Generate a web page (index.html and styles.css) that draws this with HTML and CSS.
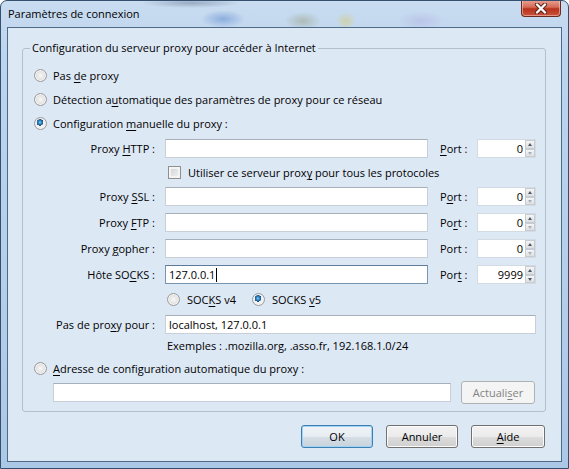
FILE: index.html
```html
<!DOCTYPE html>
<html lang="fr">
<head>
    <meta charset="UTF-8">
    <meta name="viewport" content="width=device-width, initial-scale=1.0">
    <title>Paramètres de connexion</title>
    <link rel="stylesheet" href="styles.css">
</head>
<body>
    <div class="window">
        <div class="titlebar">
            <span class="title">Paramètres de connexion</span>
            <span class="close">
                <svg width="16" height="11" viewBox="0 0 16 11">
                    <path d="M4 1.5 L12 9.5 M12 1.5 L4 9.5" stroke="#5a2018" stroke-width="4.2" stroke-linecap="round"/>
                    <path d="M4 1.5 L12 9.5 M12 1.5 L4 9.5" stroke="#fff" stroke-width="2.4" stroke-linecap="round"/>
                </svg>
            </span>
        </div>
        <div class="client">
            <fieldset class="group">
                <legend>Configuration du serveur proxy pour accéder à Internet</legend>
                <div class="option"><span class="radio"></span><span>Pas <u>d</u>e proxy</span></div>
                <div class="option"><span class="radio"></span><span>Détection a<u>u</u>tomatique des paramètres de proxy pour ce réseau</span></div>
                <div class="option"><span class="radio on"></span><span>Configuration <u>m</u>anuelle du proxy :</span></div>

                <div class="manual">
                    <span class="lbl">Proxy <u>H</u>TTP :</span>
                    <span class="field"></span>
                    <span class="port-lbl"><u>P</u>ort :</span>
                    <span class="port"><span class="val">0</span><span class="spin"><span class="up"></span><span class="down off"></span></span></span>

                    <div class="wide share"><span class="check"></span><span>Utiliser ce serveur prox<u>y</u> pour tous les protocoles</span></div>

                    <span class="lbl">Proxy <u>S</u>SL :</span>
                    <span class="field"></span>
                    <span class="port-lbl">P<u>o</u>rt :</span>
                    <span class="port"><span class="val">0</span><span class="spin"><span class="up"></span><span class="down off"></span></span></span>

                    <span class="lbl">Proxy <u>F</u>TP :</span>
                    <span class="field"></span>
                    <span class="port-lbl">Po<u>r</u>t :</span>
                    <span class="port"><span class="val">0</span><span class="spin"><span class="up"></span><span class="down off"></span></span></span>

                    <span class="lbl">Proxy <u>g</u>opher :</span>
                    <span class="field"></span>
                    <span class="port-lbl">Port :</span>
                    <span class="port"><span class="val">0</span><span class="spin"><span class="up"></span><span class="down off"></span></span></span>

                    <span class="lbl">Hôte SO<u>C</u>KS :</span>
                    <span class="field focus"><span>127.0.0.1</span><span class="caret"></span></span>
                    <span class="port-lbl">Por<u>t</u> :</span>
                    <span class="port"><span class="val">9999</span><span class="spin"><span class="up"></span><span class="down"></span></span></span>

                    <div class="wide versions">
                        <span class="ver"><span class="radio"></span><span>SOC<u>K</u>S v4</span></span>
                        <span class="ver"><span class="radio on"></span><span>SOCKS <u>v</u>5</span></span>
                    </div>

                    <span class="lbl">Pas de pro<u>x</u>y pour :</span>
                    <span class="field wide"><span>localhost, 127.0.0.1</span></span>

                    <div class="wide hint">Exemples : .mozilla.org, .asso.fr, 192.168.1.0/24</div>
                </div>

                <div class="option auto"><span class="radio"></span><span><u>A</u>dresse de configuration automatique du proxy :</span></div>
                <div class="url-row">
                    <span class="field url"></span>
                    <button class="btn disabled">Actuali<u>s</u>er</button>
                </div>
            </fieldset>

            <div class="buttons">
                <button class="btn default">OK</button>
                <button class="btn">Annuler</button>
                <button class="btn"><u>A</u>ide</button>
            </div>
        </div>
    </div>
</body>
</html>
```

FILE: styles.css
```css
*{
    box-sizing: border-box;
}
body{
    margin: 0;
    font-family: "Open Sans", "Noto Sans", sans-serif;
    font-size: 11px;
    color: #000;
}
u{
    text-underline-offset: 2px;
}
.window{
    width: 569px;
    height: 469px;
    display: flex;
    flex-direction: column;
    border: 1px solid #34506e;
    border-radius: 7px 7px 0 0;
    background:
        radial-gradient(ellipse 22px 9px at 222px 18px, rgba(70, 120, 200, 0.45), transparent),
        radial-gradient(ellipse 18px 9px at 302px 20px, rgba(130, 130, 80, 0.35), transparent),
        radial-gradient(ellipse 10px 9px at 345px 20px, rgba(220, 200, 90, 0.45), transparent),
        radial-gradient(ellipse 24px 10px at 420px 20px, rgba(170, 160, 220, 0.35), transparent),
        radial-gradient(ellipse 50px 5px at 190px 2px, rgba(60, 80, 110, 0.35), transparent),
        linear-gradient(#c9dcf0, #bcd4ee 12%, #b5cee9 60%, #abc8e7);
    overflow: hidden;
}
.titlebar{
    height: 26px;
    display: flex;
    justify-content: space-between;
    padding: 0 7px 0 7px;
}
.title{
    padding-top: 5px;
    line-height: 16px;
    color: #000;
}
.close{
    width: 40px;
    height: 17px;
    margin-top: -1px;
    display: flex;
    align-items: center;
    justify-content: center;
    border: 1px solid #6a2a20;
    border-top: 0;
    border-radius: 0 0 4px 4px;
    background: linear-gradient(#e9a494, #d46a55 45%, #b8321d 55%, #c9553d);
    box-shadow: inset 0 0 0 1px rgba(255, 220, 210, 0.5);
}
.client{
    flex: 1;
    margin: 0 6px 6px 6px;
    border: 1px solid #4f6a88;
    background: #dde8f5;
    display: flex;
    flex-direction: column;
}
.group{
    margin: 12px 15px 0 14px;
    padding: 7px 0 7px 0;
    border: 1px solid #b4c0cc;
    border-radius: 3px;
    min-inline-size: 0;
}
.group legend{
    margin-left: 7px;
    padding: 0 2px;
    line-height: 16px;
}
.option{
    height: 24px;
    display: flex;
    align-items: center;
    padding-left: 11px;
}
.radio{
    width: 13px;
    height: 13px;
    margin-right: 6px;
    border-radius: 50%;
    border: 1px solid #9b9b9b;
    background: radial-gradient(circle at 50% 50%, #f8f8f8 0, #e6e6e6 45%, #cfcfcf 100%);
    box-shadow: inset 0 0 0 1px #f4f4f4;
    flex: none;
}
.radio.on{
    background:
        radial-gradient(circle at 45% 40%, #8fd1f7 0, #2d88c6 1.6px, #1b4f86 3.2px, transparent 3.4px),
        radial-gradient(circle at 50% 50%, #fefefe 0, #eeeeee 55%, #d2d2d2 100%);
}
.manual{
    display: grid;
    grid-template-columns: 132px 263px 29px 59px;
    column-gap: 10px;
    row-gap: 7px;
    margin-top: 4px;
    align-items: center;
}
.lbl{
    text-align: right;
    white-space: nowrap;
}
.port-lbl{
    padding-left: 2px;
    white-space: nowrap;
}
.wide{
    grid-column: 2 / -1;
}
.field{
    height: 19px;
    background: #fff;
    border: 1px solid #c8cfd7;
    border-top-color: #a7b0ba;
    padding: 0 3px;
    display: flex;
    align-items: center;
    white-space: nowrap;
}
.field.focus{
    border-color: #7a95b0;
    border-top-color: #5d7a98;
}
.caret{
    width: 1px;
    height: 14px;
    margin-left: 1px;
    background: #000;
}
.port{
    height: 19px;
    display: flex;
    background: #fff;
    border: 1px solid #d3dae2;
}
.port .val{
    flex: 1;
    text-align: right;
    padding-right: 2px;
    line-height: 17px;
}
.spin{
    width: 10px;
    display: flex;
    flex-direction: column;
}
.spin span{
    flex: 1;
    position: relative;
    border: 1px solid #c6ccd3;
    background: linear-gradient(#f6f6f6, #dedede);
}
.spin span::after{
    content: "";
    position: absolute;
    left: 2px;
    top: 2px;
    border-left: 2px solid transparent;
    border-right: 2px solid transparent;
}
.spin .up::after{
    border-bottom: 3px solid #4a5a6a;
}
.spin .down::after{
    border-top: 3px solid #4a5a6a;
}
.spin .down.off::after{
    border-top-color: #a8b0b8;
}
.share{
    height: 15px;
    display: flex;
    align-items: center;
    padding-left: 3px;
}
.check{
    width: 13px;
    height: 13px;
    margin-right: 7px;
    border: 1px solid #8e8f8f;
    background: linear-gradient(135deg, #cbcfd5, #f6f6f6);
    box-shadow: inset 0 0 0 2px #f4f4f4;
}
.versions{
    height: 17px;
    display: flex;
    align-items: center;
    padding-left: 2px;
}
.ver{
    display: flex;
    align-items: center;
    width: 85px;
}
.ver .radio{
    margin-right: 7px;
}
.hint{
    height: 10px;
    line-height: 10px;
    padding-left: 2px;
    white-space: nowrap;
}
.option.auto{
    margin-top: 5px;
}
.url-row{
    margin-top: 1px;
    padding-left: 30px;
    display: flex;
    align-items: center;
    gap: 10px;
}
.field.url{
    width: 398px;
}
.btn{
    width: 72px;
    height: 23px;
    padding: 0;
    font-family: inherit;
    font-size: 11px;
    color: #000;
    border: 1px solid #707070;
    border-radius: 3px;
    background: linear-gradient(#f2f2f2, #ebebeb 50%, #dddddd 50%, #cfcfcf);
    box-shadow: inset 0 0 0 1px #fbfbfb;
}
.btn.default{
    border-color: #3c7fb1;
    background: linear-gradient(#f0f4f8, #e6ecf1 50%, #d6dee6 50%, #c9d3dc);
    box-shadow: inset 0 0 0 1px #9fd4f4;
}
.btn.disabled{
    width: 74px;
    color: #838383;
    border-color: #adb2b5;
    background: #f4f4f4;
    box-shadow: none;
}
.buttons{
    display: flex;
    justify-content: flex-end;
    gap: 13px;
    margin-top: 13px;
    padding-right: 16px;
}
.buttons .btn:last-child{
    width: 74px;
}
```
